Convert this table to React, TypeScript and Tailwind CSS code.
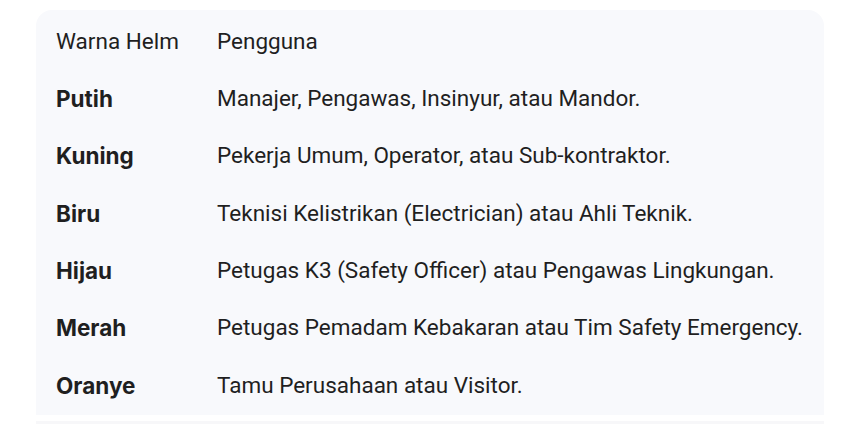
const rows = [
  { color: "Putih", user: "Manajer, Pengawas, Insinyur, atau Mandor." },
  { color: "Kuning", user: "Pekerja Umum, Operator, atau Sub-kontraktor." },
  { color: "Biru", user: "Teknisi Kelistrikan (Electrician) atau Ahli Teknik." },
  { color: "Hijau", user: "Petugas K3 (Safety Officer) atau Pengawas Lingkungan." },
  { color: "Merah", user: "Petugas Pemadam Kebakaran atau Tim Safety Emergency." },
  { color: "Oranye", user: "Tamu Perusahaan atau Visitor." },
];

export default function App() {
  return (
    <div className="w-[856px] h-[424px] bg-white px-9 pt-[10px] overflow-hidden font-['Roboto',sans-serif] text-[22.5px] text-[#1f1f1f]">
      <div className="w-[788px] rounded-t-2xl bg-[#f8f9fc] pt-[3px] pb-[1px]">
        <div className="flex h-[57.3px] items-center">
          <div className="w-[181px] pl-5">Warna Helm</div>
          <div>Pengguna</div>
        </div>
        {rows.map((row) => (
          <div key={row.color} className="flex h-[57.3px] items-center">
            <div className="w-[181px] pl-5 font-['Inter',sans-serif] font-bold">{row.color}</div>
            <div>{row.user}</div>
          </div>
        ))}
      </div>
      <div className="mt-[6px] h-[3px] w-[788px] bg-[#f7f7f9]" />
    </div>
  );
}
